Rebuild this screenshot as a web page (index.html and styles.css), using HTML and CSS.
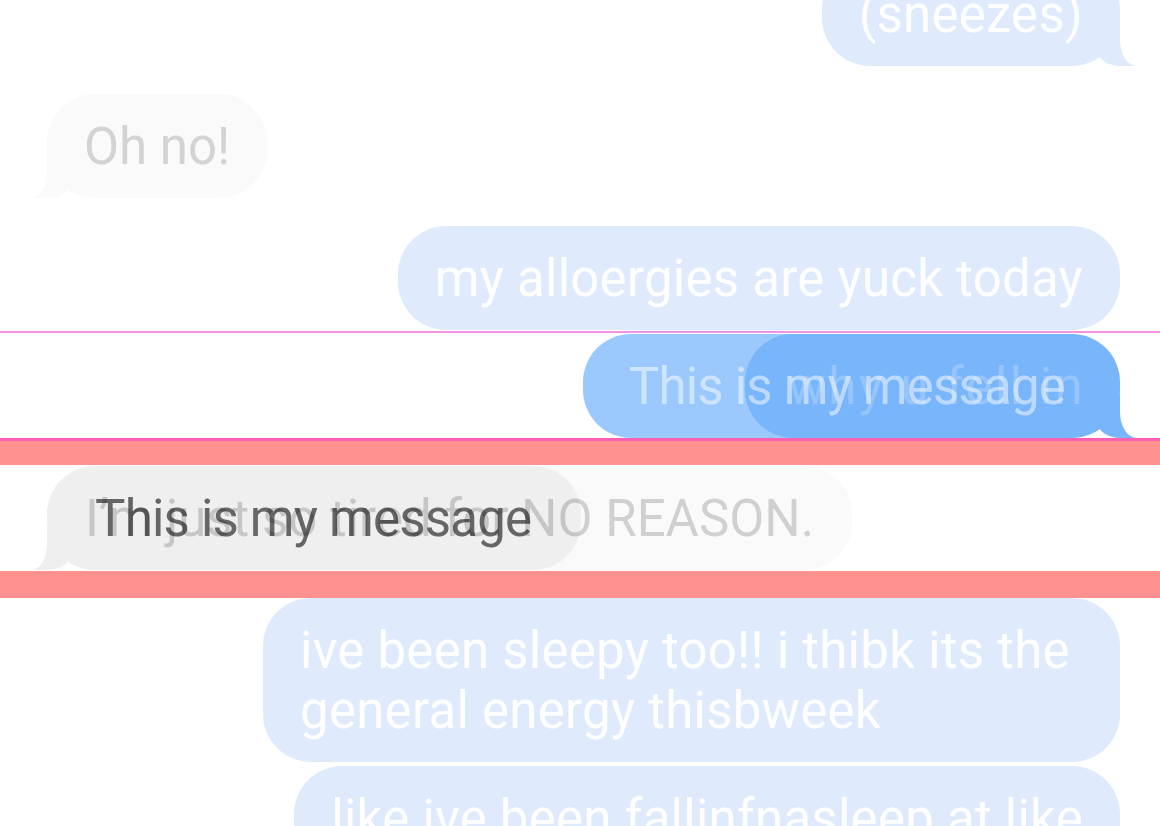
FILE: index.html
```html
<!DOCTYPE html>
<html lang="en">
<head>
<meta charset="utf-8">
<title>Messages</title>
<link rel="stylesheet" href="styles.css">
</head>
<body>
<div class="thread">
  <div class="row sent"><div class="bubble pale tail-right">(sneezes)</div></div>
  <div class="row recv gap"><div class="bubble ghost tail-left">Oh no!</div></div>
  <div class="row sent gap"><div class="bubble pale">my alloergies are yuck today</div></div>

  <div class="guide guide-top"></div>
  <div class="stack stack-sent">
    <div class="bubble sky sky-base">This is my message</div>
    <div class="bubble azure tail-right">why u fell in</div>
    <div class="bubble sky sky-text">This is my message</div>
  </div>
  <div class="guide guide-bottom"></div>
  <div class="band band-top"></div>

  <div class="stack stack-recv">
    <div class="bubble ghost ghost-base">I’m just so tired for NO REASON.</div>
    <div class="bubble silver tail-left">This is my message</div>
    <div class="bubble ghost ghost-text">I’m just so tired for NO REASON.</div>
  </div>
  <div class="band band-bottom"></div>

  <div class="row sent"><div class="bubble pale">ive been sleepy too!! i thibk its the general energy thisbweek</div></div>
  <div class="row sent tight"><div class="bubble pale">like ive been fallinfnasleep at like</div></div>
</div>
</body>
</html>
```

FILE: styles.css
```css
html, body {
  margin: 0;
  padding: 0;
  background: #ffffff;
  overflow: hidden;
}

body {
  font-family: Roboto, "Noto Sans", sans-serif;
  width: 1160px;
  height: 826px;
}

.thread {
  display: flex;
  flex-direction: column;
  margin-top: -38px;
  padding: 0 40px 0 47px;
}

.row {
  display: flex;
}

.row.sent {
  justify-content: flex-end;
}

.row.recv {
  justify-content: flex-start;
}

.row.gap {
  margin-top: 28px;
}

.row.tight {
  margin-top: 4px;
}

.bubble {
  position: relative;
  box-sizing: border-box;
  max-width: 857px;
  padding: 23px 37px 21px;
  border-radius: 48px;
  font-size: 51px;
  line-height: 60px;
  white-space: normal;
}

/* colour variants */
.pale {
  background: #dfeafc;
  color: #ffffff;
  letter-spacing: 0.25px;
}

.ghost {
  background: #fafafa;
  color: #d3d3d3;
}

.sky {
  background: #9bc9fd;
  color: rgba(255, 255, 255, 0.5);
  letter-spacing: -0.8px;
}

.azure {
  background: #78b5fb;
  color: rgba(255, 255, 255, 0.22);
  letter-spacing: 2.4px;
}

.silver {
  background: #efefef;
  color: #666666;
  letter-spacing: -0.8px;
}

/* tails */
.tail-right::before {
  content: "";
  position: absolute;
  right: -17px;
  bottom: 0;
  width: 40px;
  height: 44px;
  background: inherit;
  border-bottom-left-radius: 24px 16px;
}

.tail-right::after {
  content: "";
  position: absolute;
  right: -23px;
  bottom: 0;
  width: 23px;
  height: 50px;
  background: #ffffff;
  border-bottom-left-radius: 17px 26px;
}

.tail-left::before {
  content: "";
  position: absolute;
  left: -16px;
  bottom: 0;
  width: 40px;
  height: 44px;
  background: inherit;
  border-bottom-right-radius: 24px 16px;
}

.tail-left::after {
  content: "";
  position: absolute;
  left: -23px;
  bottom: 0;
  width: 23px;
  height: 50px;
  background: #ffffff;
  border-bottom-right-radius: 16px 26px;
}

/* debug guides */
.guide-top {
  height: 2px;
  margin: 1px -40px 0 -47px;
  background: #f792e2;
}

.guide-bottom {
  height: 3px;
  margin: 0 -40px 0 -47px;
  background: #fb5fb2;
}

.band {
  margin: 0 -40px 0 -47px;
  background: #ff9290;
}

.band-top {
  height: 24px;
}

.band-bottom {
  height: 27px;
}

/* overlapping stacks */
.stack {
  display: grid;
}

.stack > .bubble {
  grid-area: 1 / 1;
}

.stack-sent {
  justify-items: end;
  padding-top: 1px;
}

.stack-recv {
  justify-items: start;
  padding: 1px 0 1px;
}

.sky-base {
  color: transparent;
  padding: 23px 46px 21px;
  margin-right: 9px;
}

.sky-text {
  background: transparent;
  padding: 23px 46px 21px;
  margin-right: 9px;
}

.azure {
  padding: 23px 35px 21px 43px;
}

.ghost-base {
  color: transparent;
  padding: 23px 38px 21px;
}

.ghost-text {
  background: transparent;
  color: rgba(0, 0, 0, 0.17);
  padding: 23px 38px 21px;
}

.silver {
  padding: 23px 50px 21px 48px;
}
```
